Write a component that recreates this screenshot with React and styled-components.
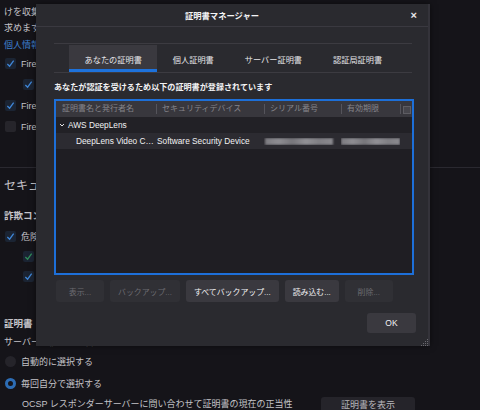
import React from "react";
import styled, { createGlobalStyle, css } from "styled-components";

const Global = createGlobalStyle`
  html, body { margin: 0; padding: 0; }
  body {
    background: #151419;
    font-family: "Liberation Sans", "Noto Sans CJK JP", sans-serif;
    overflow: hidden;
  }
  #root { width: 480px; height: 410px; position: relative; overflow: hidden; }
`;

/* ---------- background preferences page ---------- */
const Page = styled.div`
  width: 480px;
  height: 410px;
  padding-top: 4px;
  box-sizing: border-box;
  color: #c4c3c8;
  font-size: 9px;
`;

const TextLine = styled.div`
  height: ${(p) => p.$h || 16}px;
  line-height: ${(p) => p.$h || 16}px;
  margin-top: ${(p) => p.$mt || 0}px;
  padding-left: ${(p) => (p.$indent ? 22 : 4)}px;
  white-space: nowrap;
  color: ${(p) => (p.$link ? "#3d7fcf" : "inherit")};
  font-weight: ${(p) => (p.$bold ? 700 : 400)};
  font-size: ${(p) => p.$size || 9}px;
`;

const Rule = styled.div`
  height: 1px;
  background: #2a2930;
  margin-top: ${(p) => p.$mt || 0}px;
`;

const OptionRow = styled.div`
  display: flex;
  align-items: center;
  gap: 5px;
  height: ${(p) => p.$h || 21}px;
  padding-left: ${(p) => (p.$indent ? 23 : 5)}px;
  white-space: nowrap;
`;

const Box = styled.span`
  width: 11px;
  height: 11px;
  border-radius: 2px;
  background: ${(p) => (p.$checked ? "#1b2433" : "#26252b")};
  display: inline-flex;
  align-items: center;
  justify-content: center;
  flex: none;
`;

const Radio = styled.span`
  width: 11px;
  height: 11px;
  border-radius: 50%;
  flex: none;
  box-sizing: border-box;
  ${(p) =>
    p.$on
      ? css`
          background: #151419;
          border: 3px solid #2d6db5;
        `
      : css`
          background: #25242a;
        `}
`;

const LastRow = styled.div`
  display: flex;
  align-items: flex-start;
  justify-content: space-between;
  height: 20px;
  padding-left: 22px;
  padding-right: 65px;
  white-space: nowrap;
`;

const LastText = styled.span`
  line-height: 20px;
`;

const PageButton = styled.div`
  margin-top: 3px;
  width: 94px;
  height: 20px;
  background: #25242a;
  border-radius: 3px;
  color: #b9b8bd;
  text-align: center;
  line-height: 16px;
`;

const Check = ({ color = "#3f86d8" }) => (
  <svg width="9" height="9" viewBox="0 0 10 10">
    <path d="M1.5 5.5 L4 8 L8.5 1.8" stroke={color} strokeWidth="1.4" fill="none" />
  </svg>
);

/* ---------- dialog ---------- */
const Dialog = styled.div`
  position: absolute;
  left: 36px;
  top: 4px;
  width: 394px;
  height: 342px;
  box-sizing: border-box;
  background: #2a2a2f;
  border-right: 2px solid #34333a;
  box-shadow: 0 0 6px rgba(0, 0, 0, 0.5);
  display: flex;
  flex-direction: column;
  color: #f4f4f6;
  font-size: 8px;
`;

const TitleBar = styled.div`
  height: 22px;
  flex: none;
  border-bottom: 1px solid #3a3940;
  display: flex;
  align-items: center;
  justify-content: center;
  position: relative;
  padding-right: 20px;
  font-weight: 700;
  font-size: 8.3px;
`;

const Close = styled.span`
  position: absolute;
  right: 11px;
  top: 5px;
  font-size: 11px;
  line-height: 12px;
  color: #e8e8ea;
`;

const Body = styled.div`
  flex: 1;
  padding: 16px 14px 0 18px;
  display: flex;
  flex-direction: column;
  position: relative;
`;

const Tabs = styled.div`
  display: flex;
  height: 28px;
  border-top: 1px solid #3c3b41;
  border-bottom: 1px solid #3c3b41;
  padding-left: 15px;
  margin-right: 2px;
`;

const Tab = styled.div`
  padding: 0 15.5px;
  display: flex;
  align-items: center;
  font-size: 8.2px;
  color: #e6e6e9;
  box-sizing: border-box;
  margin-top: 1px;
  ${(p) =>
    p.$active &&
    css`
      background: #3a393f;
      border-bottom: 3px solid #1d72dc;
      padding-top: 3px;
    `}
`;

const Desc = styled.div`
  margin-top: 8px;
  line-height: 14px;
  height: 14px;
  font-weight: 700;
  font-size: 8.1px;
  color: #f2f2f4;
  white-space: nowrap;
`;

const Tree = styled.div`
  margin-top: 4px;
  height: 176px;
  box-sizing: border-box;
  border: 2px solid #1d6fd8;
  background: #1f1e23;
  display: flex;
  flex-direction: column;
`;

const GridRow = styled.div`
  display: grid;
  grid-template-columns: 100px 108px 77px 59px 1fr;
  height: 16px;
  align-items: center;
  background: ${(p) => p.$bg};
  white-space: nowrap;
`;

const HeadCell = styled.div`
  position: relative;
  padding-left: ${(p) => (p.$pad === undefined ? 6 : p.$pad)}px;
  color: #85848a;
  font-size: 8px;
  height: 16px;
  line-height: 16px;
  overflow: hidden;
  ${(p) =>
    p.$sep &&
    css`
      &::before {
        content: "";
        position: absolute;
        left: 0;
        top: 3px;
        width: 1px;
        height: 10px;
        background: #55545b;
      }
    `}
`;

const Cell = styled.div`
  padding-left: ${(p) => p.$pad || 1}px;
  overflow: hidden;
  white-space: nowrap;
  font-size: 8.3px;
  color: #f1f1f3;
  display: flex;
  align-items: center;
  gap: 3px;
  min-width: 0;
`;

const TextCell = styled.div`
  padding-left: ${(p) => p.$pad || 1}px;
  overflow: hidden;
  text-overflow: ellipsis;
  white-space: nowrap;
  font-size: 8.3px;
  line-height: 16px;
  color: #f1f1f3;
  min-width: 0;
`;

const Blur = styled.div`
  height: 7px;
  width: ${(p) => p.$w}px;
  background: linear-gradient(
    90deg,
    #7c7b80 0%,
    #8e8d92 20%,
    #77767b 40%,
    #929196 60%,
    #807f84 80%,
    #8b8a8f 100%
  );
  filter: blur(0.8px);
`;

const ColIcon = styled.span`
  width: 6px;
  height: 6px;
  margin: 5px 0 0 3px;
  border: 1px solid #5e5d63;
  background: #47464c;
  display: block;
`;

const ButtonRow = styled.div`
  display: flex;
  gap: 6px;
  margin-top: 5px;
  padding-left: 2px;
`;

const Btn = styled.div`
  height: 22px;
  min-width: 48px;
  box-sizing: border-box;
  padding: 0 8px;
  display: flex;
  align-items: center;
  justify-content: center;
  border-radius: 3px;
  font-size: 7.9px;
  white-space: nowrap;
  background: ${(p) => (p.$disabled ? "#303035" : "#3a393f")};
  color: ${(p) => (p.$disabled ? "#6c6b71" : "#f3f3f5")};
`;

const Footer = styled.div`
  display: flex;
  justify-content: flex-end;
  margin-top: 11px;
  margin-right: -2px;
`;

const OkBtn = styled(Btn)`
  width: 49px;
  height: 20px;
  font-size: 8.5px;
`;

const Grip = styled.svg`
  position: absolute;
  right: 0;
  bottom: 0;
`;

const Chevron = () => (
  <svg width="6" height="6" viewBox="0 0 6 6">
    <path d="M1 2 L3 4 L5 2" stroke="#e6e6e8" strokeWidth="1" fill="none" />
  </svg>
);

export default function App() {
  return (
    <>
      <Global />
      <Page>
        <TextLine>けを収集することに同意を</TextLine>
        <TextLine>求めます</TextLine>
        <TextLine $mt={1} $link>個人情報について</TextLine>
        <OptionRow>
          <Box $checked><Check /></Box>
          <span>Firefox</span>
        </OptionRow>
        <OptionRow $indent>
          <Box $checked><Check /></Box>
          <span>Firefox</span>
        </OptionRow>
        <OptionRow>
          <Box $checked><Check /></Box>
          <span>Firefox</span>
        </OptionRow>
        <OptionRow>
          <Box />
          <span>Firefox</span>
        </OptionRow>
        <Rule $mt={30} />
        <TextLine $mt={8} $h={20} $size={12}>セキュリティ</TextLine>
        <TextLine $mt={10} $h={20} $size={9.5} $bold>詐欺コンテンツと危険なソフトウェアからの防護</TextLine>
        <OptionRow $h={20}>
          <Box $checked><Check /></Box>
          <span>危険な詐欺コンテンツをブロックする</span>
        </OptionRow>
        <OptionRow $h={20} $indent>
          <Box $checked><Check color="#2f8c5a" /></Box>
          <span>危険なダウンロードをブロックする</span>
        </OptionRow>
        <OptionRow $h={20} $indent>
          <Box $checked><Check /></Box>
          <span>不要な危険ソフトウェアを警告する</span>
        </OptionRow>
        <TextLine $mt={28} $h={20} $size={9.5} $bold>証明書</TextLine>
        <TextLine>サーバーが個人証明書を要求したとき</TextLine>
        <OptionRow $h={22}>
          <Radio />
          <span>自動的に選択する</span>
        </OptionRow>
        <OptionRow $h={22}>
          <Radio $on />
          <span>毎回自分で選択する</span>
        </OptionRow>
        <LastRow>
          <LastText>OCSP レスポンダーサーバーに問い合わせて証明書の現在の正当性</LastText>
          <PageButton>証明書を表示</PageButton>
        </LastRow>
      </Page>

      <Dialog>
        <TitleBar>
          証明書マネージャー
          <Close>×</Close>
        </TitleBar>
        <Body>
          <Tabs>
            <Tab $active>あなたの証明書</Tab>
            <Tab>個人証明書</Tab>
            <Tab>サーバー証明書</Tab>
            <Tab>認証局証明書</Tab>
          </Tabs>
          <Desc>あなたが認証を受けるため以下の証明書が登録されています</Desc>
          <Tree>
            <GridRow $bg="#38373d">
              <HeadCell>証明書名と発行者名</HeadCell>
              <HeadCell $sep>セキュリティデバイス</HeadCell>
              <HeadCell $sep>シリアル番号</HeadCell>
              <HeadCell $sep>有効期限</HeadCell>
              <HeadCell $sep $pad={0}>
                <ColIcon />
              </HeadCell>
            </GridRow>
            <GridRow $bg="#222126">
              <Cell $pad={3}>
                <Chevron />
                AWS DeepLens
              </Cell>
              <Cell />
              <Cell />
              <Cell />
              <Cell />
            </GridRow>
            <GridRow $bg="#2c2b31">
              <TextCell $pad={20}>DeepLens Video Camera</TextCell>
              <TextCell>Software Security Device</TextCell>
              <Cell>
                <Blur $w={68} />
              </Cell>
              <Cell $pad={-1}>
                <Blur $w={61} />
              </Cell>
              <Cell />
            </GridRow>
          </Tree>
          <ButtonRow>
            <Btn $disabled>表示...</Btn>
            <Btn $disabled>バックアップ...</Btn>
            <Btn>すべてバックアップ...</Btn>
            <Btn>読み込む...</Btn>
            <Btn $disabled>削除...</Btn>
          </ButtonRow>
          <Footer>
            <OkBtn>OK</OkBtn>
          </Footer>
          <Grip width="7" height="7" viewBox="0 0 7 7">
            <g fill="#6a6970">
              <rect x="6" y="0" width="1" height="1" />
              <rect x="4" y="2" width="1" height="1" />
              <rect x="6" y="2" width="1" height="1" />
              <rect x="2" y="4" width="1" height="1" />
              <rect x="4" y="4" width="1" height="1" />
              <rect x="6" y="4" width="1" height="1" />
              <rect x="0" y="6" width="1" height="1" />
              <rect x="2" y="6" width="1" height="1" />
              <rect x="4" y="6" width="1" height="1" />
              <rect x="6" y="6" width="1" height="1" />
            </g>
          </Grip>
        </Body>
      </Dialog>
    </>
  );
}
